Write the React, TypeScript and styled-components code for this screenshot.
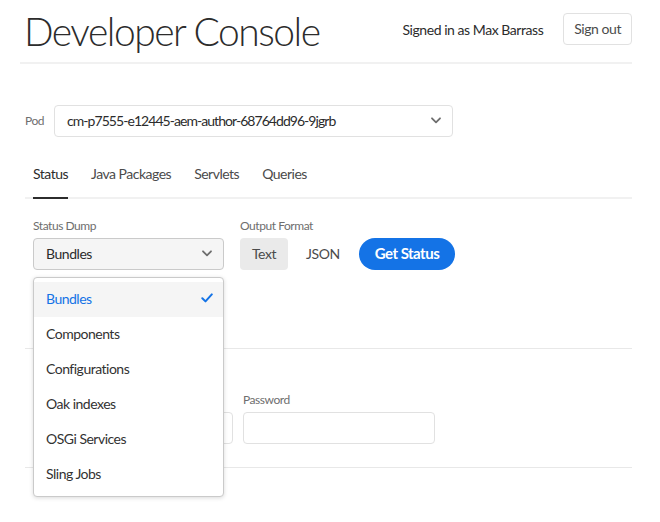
import React from "react"
import styled, { createGlobalStyle } from "styled-components"

const GlobalStyle = createGlobalStyle`
  body {
    margin: 0;
    background: #fff;
    font-family: Lato, "Open Sans", sans-serif;
    letter-spacing: -0.45px;
    color: #2c2c2c;
  }
  * { box-sizing: border-box; }
`

const Page = styled.div`
  min-height: 522px;
  padding: 0 28px 0 20px;
`

const Header = styled.header`
  display: flex;
  align-items: flex-start;
  height: 64px;
  padding-top: 13px;
  border-bottom: 2px solid #f1f1f1;
`

const Title = styled.h1`
  margin: -4px 0 0 4px;
  font-size: 39px;
  font-weight: 300;
  line-height: 44px;
  letter-spacing: -1.5px;
  color: #2c2c2c;
  flex: 1;
`

const UserBox = styled.div`
  display: flex;
  align-items: center;
  gap: 20px;
  height: 32px;
  font-size: 14px;
`

const ActionButton = styled.button<{ $fill?: boolean; $quiet?: boolean }>`
  height: 32px;
  padding: 0 ${({ $fill, $quiet }) => ($quiet ? 9 : $fill ? 11 : 10)}px 1px;
  font-family: inherit;
  font-size: 14px;
  letter-spacing: -0.45px;
  color: #4b4b4b;
  border-radius: 4px;
  border: 1px solid ${({ $quiet, $fill }) => ($quiet || $fill ? "transparent" : "#e1e1e1")};
  background: ${({ $fill }) => ($fill ? "#eaeaea" : "#fff")};
`

const Main = styled.main`
  padding-left: 5px;
`

const PodRow = styled.div`
  display: flex;
  align-items: center;
  gap: 10px;
  margin-top: 41px;
`

const SmallLabel = styled.label`
  display: block;
  min-height: 16px;
  font-size: 12px;
  line-height: 16px;
  color: #6e6e6e;
`

const Picker = styled.div<{ $width: number; $filled?: boolean }>`
  width: ${({ $width }) => $width}px;
  height: 32px;
  display: flex;
  align-items: center;
  justify-content: space-between;
  padding: 0 11px 1px 12px;
  font-size: 14px;
  color: #2c2c2c;
  border-radius: 4px;
  border: 1px solid ${({ $filled }) => ($filled ? "#cacaca" : "#e1e1e1")};
  background: ${({ $filled }) => ($filled ? "#f5f5f5" : "#fff")};
`

const PodName = styled.span`
  letter-spacing: -0.95px;
`

const TabList = styled.nav`
  display: flex;
  gap: 23px;
  margin-top: 16px;
  padding-left: 8px;
  border-bottom: 2px solid #f1f1f1;
`

const Tab = styled.div<{ $active?: boolean }>`
  height: 46px;
  display: flex;
  align-items: center;
  padding-bottom: 3px;
  font-size: 14px;
  letter-spacing: -0.5px;
  margin-bottom: -2px;
  color: ${({ $active }) => ($active ? "#2c2c2c" : "#4b4b4b")};
  border-bottom: 2px solid ${({ $active }) => ($active ? "#2c2c2c" : "transparent")};
`

const FormRow = styled.div`
  display: flex;
  align-items: flex-end;
  gap: 16px;
  margin-top: 19px;
  padding-left: 8px;
`

const Field = styled.div`
  position: relative;
  display: flex;
  flex-direction: column;
  gap: 4px;
`

const ButtonRow = styled.div`
  display: flex;
  gap: 8px;
`

const CtaButton = styled.button`
  height: 32px;
  margin-left: 1px;
  padding: 0 16px 2px;
  border: none;
  border-radius: 16px;
  background: #1473e6;
  color: #fff;
  font-family: inherit;
  font-size: 15px;
  font-weight: 700;
  letter-spacing: -0.5px;
`

const Popover = styled.ul`
  position: absolute;
  top: 59px;
  left: 0;
  width: 191px;
  margin: 0;
  padding: 4px 0;
  list-style: none;
  background: #fff;
  border: 1px solid #cacaca;
  border-radius: 4px;
  box-shadow: 0 1px 4px rgba(0, 0, 0, 0.15);
  z-index: 10;
`

const MenuItem = styled.li<{ $selected?: boolean }>`
  height: 35px;
  display: flex;
  align-items: center;
  justify-content: space-between;
  padding: 0 10px 3px 12px;
  font-size: 14px;
  letter-spacing: -0.5px;
  color: ${({ $selected }) => ($selected ? "#1473e6" : "#323232")};
  background: ${({ $selected }) => ($selected ? "#f5f5f5" : "transparent")};
`

const Divider = styled.hr<{ $gap: number }>`
  margin: ${({ $gap }) => $gap}px 0 0;
  border: none;
  border-top: 1px solid #e8e8e8;
`

const CredRow = styled.div`
  display: flex;
  gap: 10px;
  margin-top: 43px;
  padding-left: 8px;
`

const TextInput = styled.div<{ $width: number }>`
  width: ${({ $width }) => $width}px;
  height: 32px;
  border: 1px solid #e1e1e1;
  border-radius: 4px;
  background: #fff;
`

const Chevron = () => (
  <svg width="10" height="7" viewBox="0 0 10 7">
    <path d="M1 1.3 5 5.3 9 1.3" fill="none" stroke="#6e6e6e" strokeWidth="1.8" strokeLinecap="round" strokeLinejoin="round" />
  </svg>
)

const Check = () => (
  <svg width="12" height="10" viewBox="0 0 12 10">
    <path d="M1.3 5.2 4.5 8.4 10.8 1.4" fill="none" stroke="#1473e6" strokeWidth="2" strokeLinecap="round" strokeLinejoin="round" />
  </svg>
)

const dumps = ["Bundles", "Components", "Configurations", "Oak indexes", "OSGi Services", "Sling Jobs"]
const tabs = ["Status", "Java Packages", "Servlets", "Queries"]

export default function App() {
  return (
    <>
      <GlobalStyle />
      <Page>
        <Header>
          <Title>Developer Console</Title>
          <UserBox>
            <span>Signed in as Max Barrass</span>
            <ActionButton>Sign out</ActionButton>
          </UserBox>
        </Header>
        <Main>
          <PodRow>
            <SmallLabel>Pod</SmallLabel>
            <Picker $width={399}>
              <PodName>cm-p7555-e12445-aem-author-68764dd96-9jgrb</PodName>
              <Chevron />
            </Picker>
          </PodRow>

          <TabList>
            {tabs.map((t, i) => (
              <Tab key={t} $active={i === 0}>{t}</Tab>
            ))}
          </TabList>

          <FormRow>
            <Field>
              <SmallLabel>Status Dump</SmallLabel>
              <Picker $width={191} $filled>
                <span>Bundles</span>
                <Chevron />
              </Picker>
              <Popover>
                {dumps.map((d, i) => (
                  <MenuItem key={d} $selected={i === 0}>
                    <span>{d}</span>
                    {i === 0 && <Check />}
                  </MenuItem>
                ))}
              </Popover>
            </Field>
            <Field>
              <SmallLabel>Output Format</SmallLabel>
              <ButtonRow>
                <ActionButton $fill>Text</ActionButton>
                <ActionButton $quiet>JSON</ActionButton>
                <CtaButton>Get Status</CtaButton>
              </ButtonRow>
            </Field>
          </FormRow>

          <Divider $gap={78} />

          <CredRow>
            <Field>
              <SmallLabel />
              <TextInput $width={200} />
            </Field>
            <Field>
              <SmallLabel>Password</SmallLabel>
              <TextInput $width={192} />
            </Field>
          </CredRow>

          <Divider $gap={23} />
        </Main>
      </Page>
    </>
  )
}
